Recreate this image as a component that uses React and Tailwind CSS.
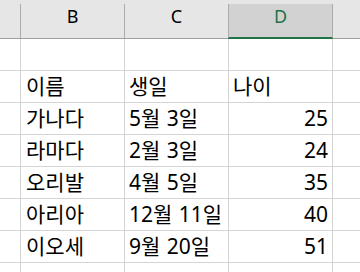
const rows = [
  ['', '', ''],
  ['이름', '생일', '나이'],
  ['가나다', '5월 3일', '25'],
  ['라마다', '2월 3일', '24'],
  ['오리발', '4월 5일', '35'],
  ['아리아', '12월 11일', '40'],
  ['이오세', '9월 20일', '51'],
  ['', '', ''],
];

const font = { fontFamily: '"Noto Sans", "Noto Sans CJK KR", sans-serif' };

export default function App() {
  return (
    <div className="h-[272px] w-[360px] overflow-hidden bg-white text-black" style={font}>
      {/* column header */}
      <div className="grid h-[39px] grid-cols-[21px_104px_104px_104px_1fr] border-b border-[#9e9e9e] bg-[#e6e6e6] pt-[4px] text-[18px] leading-[24px]">
        <div className="border-r border-[#ababab]" />
        <div className="border-r border-[#ababab] text-center">B</div>
        <div className="border-r border-[#ababab] text-center">C</div>
        <div className="-ml-px -mb-px border-b-2 border-l border-r border-[#ababab] border-b-[#217346] bg-[#d2d2d2] text-center text-[#217346]">
          D
        </div>
        <div />
      </div>

      {rows.map((r, i) => (
        <div
          key={i}
          className="grid h-[32px] grid-cols-[21px_104px_104px_104px_1fr] border-b border-[#d4d4d4] text-[21px] leading-[29px]"
        >
          <div className="border-r border-[#d4d4d4]" />
          <div className="whitespace-nowrap border-r border-[#d4d4d4] pl-[5px] pt-px">{r[0]}</div>
          <div className="whitespace-nowrap border-r border-[#d4d4d4] pl-[4px] pt-px [word-spacing:1px]">{r[1]}</div>
          <div
            className={
              i === 1
                ? 'whitespace-nowrap border-r border-[#d4d4d4] pl-[4px] pt-px'
                : 'whitespace-nowrap border-r border-[#d4d4d4] pr-[4px] pt-px text-right'
            }
          >
            {r[2]}
          </div>
          <div />
        </div>
      ))}
    </div>
  );
}
